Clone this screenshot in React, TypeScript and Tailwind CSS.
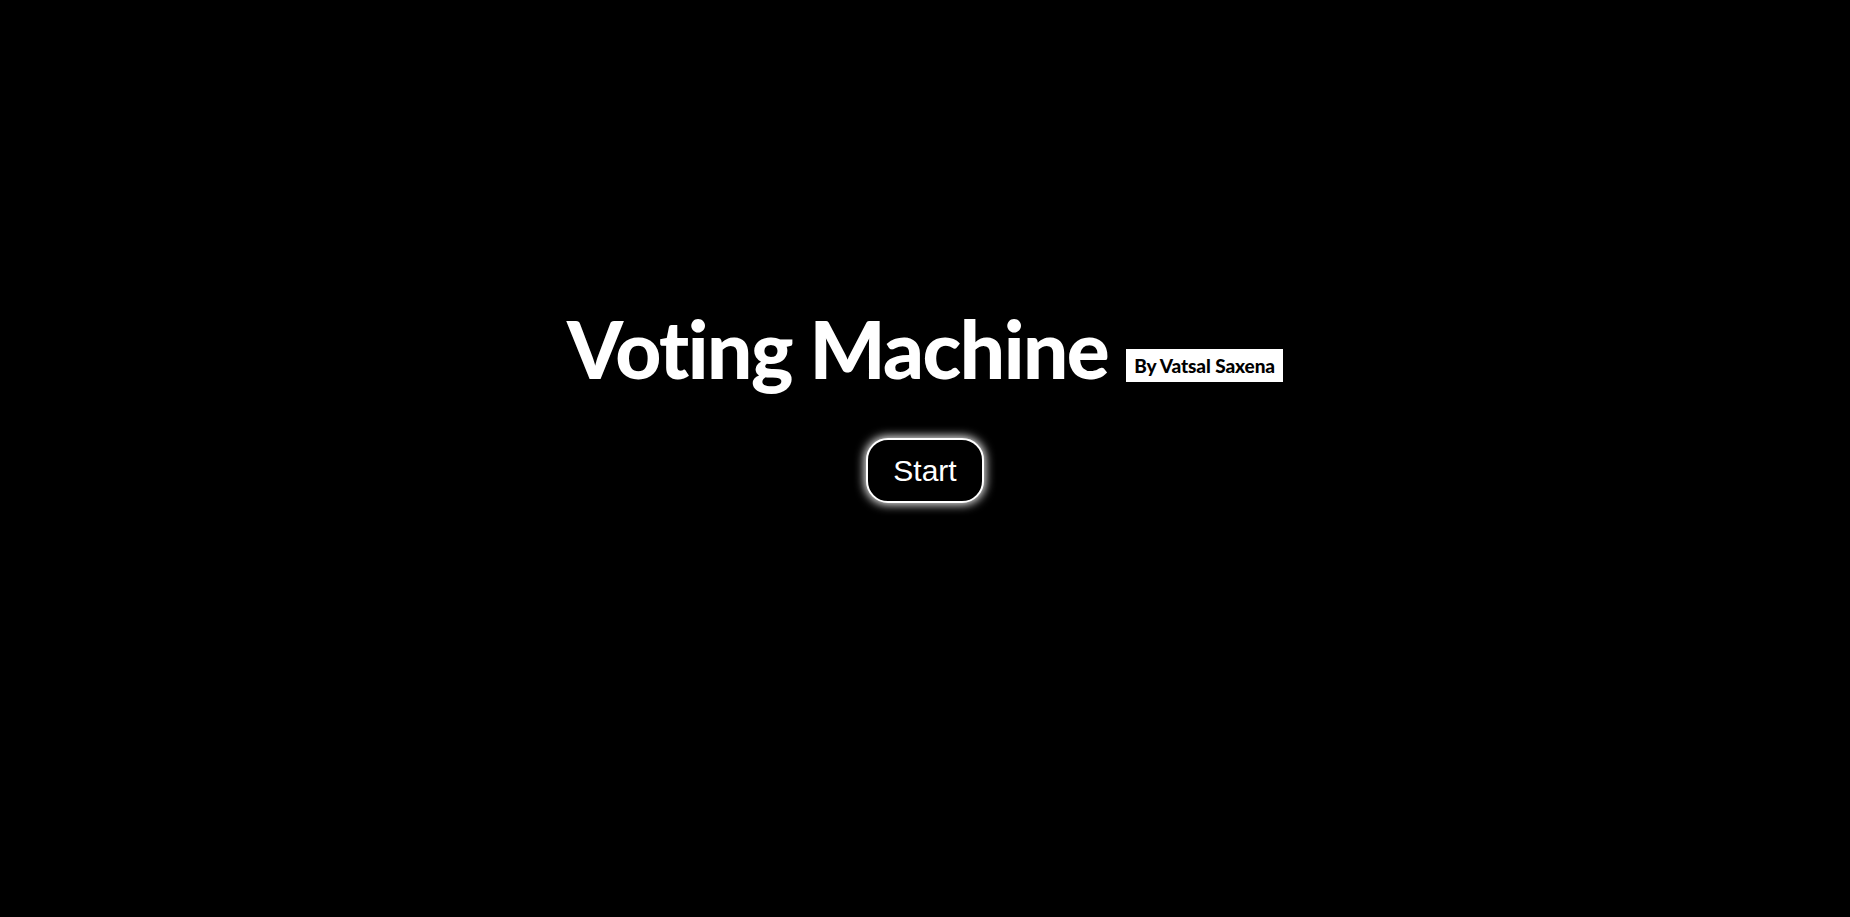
export default function App() {
  return (
    <div className="min-h-screen w-full bg-black flex flex-col items-center pt-[308px]">
      <div className="flex items-end gap-[18px]">
        <h1 className="text-white font-black text-[80px] leading-none tracking-[-1.5px] font-['Lato',sans-serif]">
          Voting Machine
        </h1>
        <span className="bg-white text-black font-black text-[19px] px-[8px] py-[4px] mb-[6px] leading-[25px] tracking-[-0.1px] font-['Lato',sans-serif]">
          By Vatsal Saxena
        </span>
      </div>
      <button className="mt-[50px] w-[118px] h-[65px] rounded-[22px] border-2 border-white bg-black text-white text-[30px] shadow-[0_0_10px_2px_rgba(255,255,255,0.9)] font-['Liberation_Sans',Arial,sans-serif]">
        Start
      </button>
    </div>
  );
}
